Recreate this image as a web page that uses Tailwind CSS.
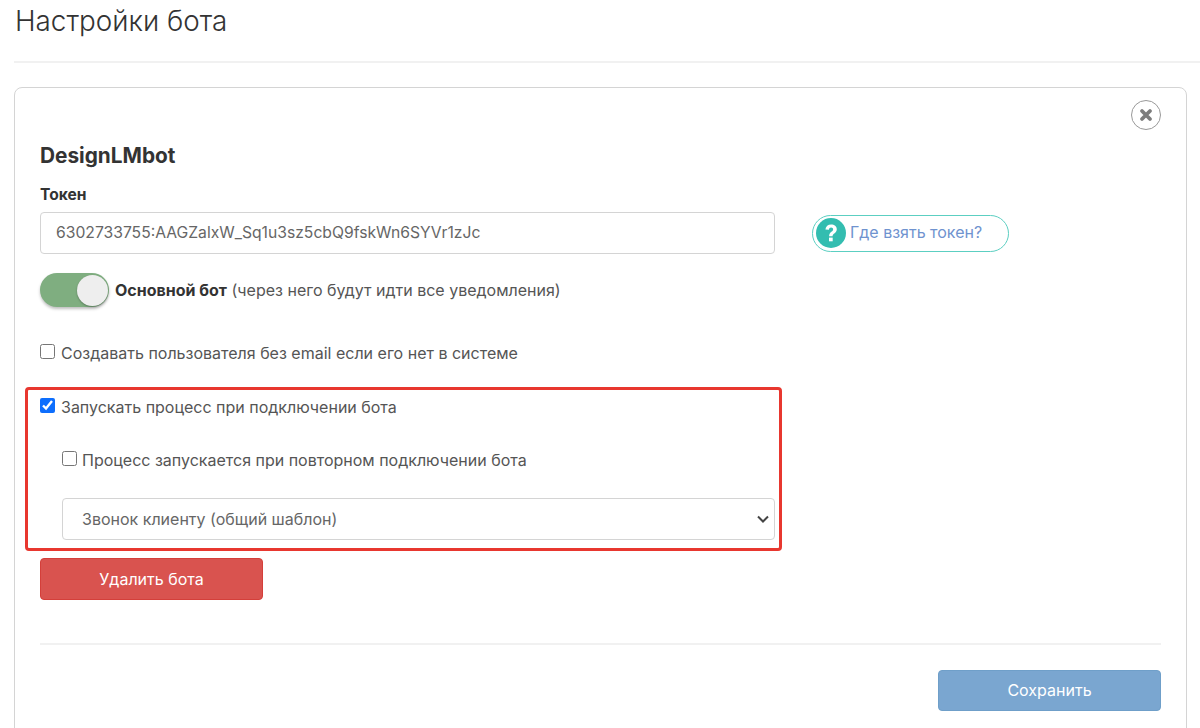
<!DOCTYPE html>
<html lang="ru">
<head>
<meta charset="utf-8">
<script src="https://cdn.jsdelivr.net/npm/@tailwindcss/browser@4"></script>
<title>Настройки бота</title>
</head>
<body class="h-[728px] w-[1200px] overflow-hidden bg-white font-['Inter','Open_Sans',sans-serif] text-[16px] text-[#555]">
<div class="h-[728px] overflow-hidden pl-[14px]">
  <h1 class="h-[63px] border-b-2 border-[#f1f1f1] pl-px pt-[1px] text-[27.8px] font-light leading-[40px] text-[#333]">Настройки бота</h1>
  <div class="relative mt-[24px] h-[700px] w-[1173px] rounded-lg border border-[#d4d4d4] px-[25px] pt-[56px]">
    <button class="absolute right-[25px] top-[12px] flex h-[30px] w-[30px] items-center justify-center rounded-full border border-[#999] bg-white">
      <svg width="14" height="14" viewBox="0 0 14 14"><path d="M3 3 11 11M11 3 3 11" stroke="#7d7d7d" stroke-width="3.8" stroke-linecap="round"/></svg>
    </button>
    <h2 class="text-[20.8px] font-bold leading-[24px] text-[#333]">DesignLMbot</h2>
    <div class="mt-[17px] text-[15.6px] font-bold leading-[20px] text-[#333]">Токен</div>
    <div class="mt-[7px] flex items-center">
      <div class="flex h-[42px] w-[735px] items-center rounded border border-[#d4d4d4] px-[15px] text-[15.7px] text-[#666]">6302733755:AAGZalxW_Sq1u3sz5cbQ9fskWn6SYVr1zJc</div>
      <a class="ml-[37px] flex h-[37px] w-[197px] items-center rounded-full border border-[#5ccfc2] pl-[3px] text-[#6f93cf]">
        <svg class="mr-[4px] shrink-0" width="30" height="30" viewBox="0 0 30 30"><circle cx="15" cy="15" r="15" fill="#33bdb0"/><path d="M9.4 11.6c.3-3.4 2.6-5.2 5.7-5.2 3.3 0 5.7 1.9 5.7 4.8 0 4-4.2 4-4.2 7.1h-3.5c-.1-4.5 4-4.6 4-6.9 0-1.1-.8-1.8-2-1.8s-2 .8-2.2 2.2z" fill="#fff"/><rect x="13" y="19.6" width="3.7" height="3.7" fill="#fff"/></svg>
        <span class="pb-[2px]">Где взять токен?</span>
      </a>
    </div>
    <div class="mt-[19px] flex items-center">
      <div class="relative flex h-[34px] w-[69px] items-center justify-end rounded-full bg-[#7fae80] pr-px shadow-[0_2px_3px_rgba(0,0,0,0.25)]">
        <div class="h-[31px] w-[31px] rounded-full bg-[#eeeeee] shadow-[0_1px_2px_rgba(0,0,0,0.3)]"></div>
      </div>
      <div class="ml-[6px] text-[#555]"><b class="font-bold text-[#333]">Основной бот</b> (через него будут идти все уведомления)</div>
    </div>
    <label class="mt-[36px] flex h-[20px] items-center">
      <input type="checkbox" class="mb-[3px] mr-[6px] h-[15px] w-[15px] accent-[#0d6efd]">
      Создавать пользователя без email если его нет в системе
    </label>
    <div class="-ml-[15px] mt-[24px] h-[164px] w-[757px] rounded border-[3px] border-[#e8372f] pl-[12px] pr-[3px] pt-[7px]">
      <label class="flex h-[20px] items-center">
        <input type="checkbox" checked class="mb-[4px] mr-[6px] h-[15px] w-[15px] accent-[#0d6efd]">
        Запускать процесс при подключении бота
      </label>
      <label class="ml-[22px] mt-[33px] flex h-[20px] items-center">
        <input type="checkbox" class="mb-[4px] mr-[5px] h-[15px] w-[15px] accent-[#0d6efd]">
        Процесс запускается при повторном подключении бота
      </label>
      <div class="ml-[22px] mt-[28px] flex h-[42px] w-[713px] items-center justify-between rounded border border-[#d4d4d4] pl-[19px] pr-[4px] text-[#666]">
        Звонок клиенту (общий шаблон)
        <svg width="14" height="10" viewBox="0 0 14 10"><path d="M2 2.5 7 7.5 12 2.5" fill="none" stroke="#444" stroke-width="2"/></svg>
      </div>
    </div>
    <button class="mt-[7px] block h-[42px] w-[223px] rounded border border-[#d43f3a] bg-[#d9534f] text-center text-white">Удалить бота</button>
    <div class="mt-[43px] h-[2px] w-[1121px] bg-[#f1f1f1]"></div>
    <div class="mt-[25px] flex w-[1121px] justify-end">
      <button class="h-[41px] w-[223px] rounded border border-[#6f9fc9] bg-[#7aa6d0] pb-[2px] text-center text-white">Сохранить</button>
    </div>
  </div>
</div>
</body>
</html>
